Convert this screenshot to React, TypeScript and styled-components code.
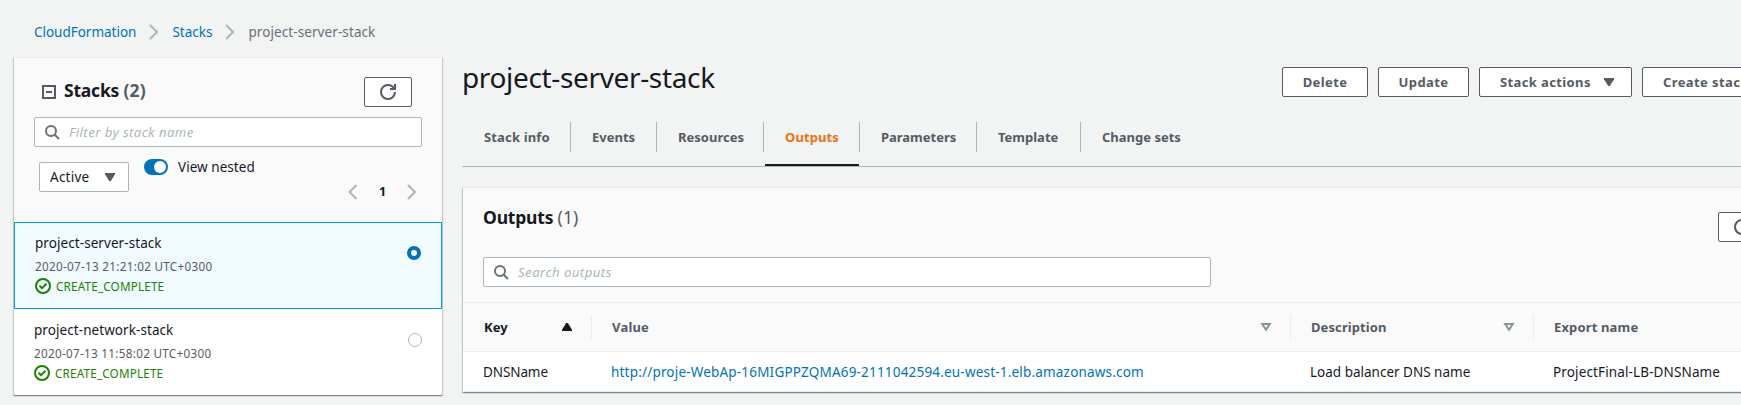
import React from "react";
import styled, { createGlobalStyle } from "styled-components";

const c = {
  ink: "#16191f",
  muted: "#545b64",
  link: "#0073bb",
  line: "#eaeded",
  control: "#aab7b8",
  orange: "#ec7211",
  green: "#1d8102",
  header: "#fafafa",
};

const GlobalStyle = createGlobalStyle`
  * { box-sizing: border-box; }
  body {
    margin: 0;
    overflow: hidden;
    background: #f2f3f3;
    color: ${c.ink};
    font: 13.5px/20px "Noto Sans", "Open Sans", sans-serif;
  }
`;

const Label = styled.span<{ $track?: number }>`
  white-space: nowrap;
  letter-spacing: ${(p) => p.$track ?? 0}px;
`;

const Page = styled.div`
  width: 100%;
  height: 405px;
  overflow: hidden;
`;

const Breadcrumbs = styled.nav`
  display: flex;
  align-items: center;
  height: 57px;
  padding: 7px 0 0 34px;
  color: #687078;
`;

const Crumb = styled.a`
  color: ${c.link};
  white-space: nowrap;
`;

const CrumbArrow = styled.span`
  display: flex;
  margin: 0 10px 0 10px;
`;

const Columns = styled.div`
  display: flex;
  align-items: flex-start;
`;

const Panel = styled.section`
  background: #fff;
  border-top: 1px solid ${c.line};
  box-shadow: 0 1px 1px 0 rgba(0, 28, 36, 0.3), 1px 1px 1px 0 rgba(0, 28, 36, 0.15),
    -1px 1px 1px 0 rgba(0, 28, 36, 0.15);
`;

const Sidebar = styled(Panel)`
  flex: none;
  width: 428px;
  height: 338px;
  margin-left: 14px;
`;

const SidebarHead = styled.div`
  height: 164px;
  background: ${c.header};
`;

const SidebarTitleRow = styled.div`
  display: flex;
  align-items: flex-start;
  padding: 19px 30px 0 28px;
`;

const CollapseBox = styled.span`
  display: flex;
  align-items: center;
  justify-content: center;
  width: 14px;
  height: 14px;
  margin: 8px 8px 0 0;
  border: 2px solid ${c.muted};

  &::before {
    content: "";
    width: 6px;
    height: 2px;
    background: ${c.muted};
  }
`;

const PanelTitle = styled.h2`
  margin: 0;
  font-size: 17.5px;
  line-height: 22px;
  font-weight: 700;
  letter-spacing: -0.2px;
  white-space: nowrap;
`;

const SidebarTitle = styled(PanelTitle)`
  margin: 2px auto 0 0;
`;

const Count = styled.span<{ $weight?: number }>`
  color: ${c.muted};
  font-weight: ${(p) => p.$weight ?? 700};
  letter-spacing: 0.1px;
`;

const Button = styled.button<{ $width: number }>`
  display: flex;
  flex: none;
  align-items: center;
  justify-content: center;
  gap: 10px;
  width: ${(p) => p.$width}px;
  height: 30px;
  padding: 0;
  border: 1px solid ${c.muted};
  border-radius: 2px;
  background: #fff;
  color: ${c.muted};
  font: inherit;
  font-size: 13px;
  font-weight: 700;
`;

const MenuButton = styled(Button)`
  justify-content: flex-start;
  padding-left: 20px;
`;

const SearchBox = styled.div`
  display: flex;
  align-items: center;
  gap: 9px;
  height: 30px;
  padding-left: 9px;
  border: 1px solid ${c.control};
  border-radius: 2px;
  background: #fff;
  color: ${c.control};
  font-size: 13.2px;
  font-style: italic;
`;

const StackFilter = styled(SearchBox)`
  margin: 10px 20px 0;
`;

const FilterRow = styled.div`
  display: flex;
  align-items: flex-start;
  padding: 0 22px 0 25px;
`;

const Select = styled.div`
  display: flex;
  align-items: center;
  justify-content: space-between;
  width: 90px;
  height: 30px;
  margin-top: 15px;
  padding: 0 10px 0 10px;
  border: 1px solid ${c.control};
  border-radius: 2px;
  background: #fff;
`;

const Toggle = styled.span`
  display: flex;
  justify-content: flex-end;
  width: 24px;
  height: 16px;
  margin: 12px 10px 0 15px;
  padding: 2px;
  border-radius: 8px;
  background: ${c.link};

  &::before {
    content: "";
    width: 12px;
    height: 12px;
    border-radius: 50%;
    background: #fff;
  }
`;

const ToggleLabel = styled(Label)`
  margin-top: 10px;
`;

const Pagination = styled.div`
  display: flex;
  align-items: center;
  justify-content: space-between;
  width: 75px;
  margin: 35px 0 0 auto;
  font-weight: 700;
`;

const PageNumber = styled.span`
  font-size: 12.5px;
`;

const StackRow = styled.div<{ $selected?: boolean }>`
  display: flex;
  justify-content: space-between;
  height: ${(p) => (p.$selected ? 87 : 86)}px;
  padding: ${(p) => (p.$selected ? "10px 20px 0" : "11px 20px 0")};
  border: ${(p) => (p.$selected ? "1px solid #00a1c9" : "0")};
  background: ${(p) => (p.$selected ? "#f1faff" : "#fff")};
`;

const StackText = styled.div`
  display: flex;
  flex-direction: column;
`;

const StackDate = styled(Label)`
  margin-top: 4px;
  color: ${c.muted};
  font-size: 11.7px;
  line-height: 18px;
`;

const Status = styled.div`
  display: flex;
  gap: 5px;
  margin-top: 2px;
  color: ${c.green};
  font-size: 11.7px;
  line-height: 18px;
`;

const Radio = styled.span<{ $on?: boolean }>`
  width: 14px;
  height: 14px;
  margin-top: 13px;
  border: ${(p) => (p.$on ? `4px solid ${c.link}` : `1px solid ${c.control}`)};
  border-radius: 50%;
  background: #fff;
`;

const Main = styled.main`
  flex: none;
  width: 1299px;
  margin-left: 20px;
`;

const MainHead = styled.header`
  display: flex;
  align-items: flex-start;
  height: 65px;
`;

const PageTitle = styled.h1`
  flex: none;
  width: 820px;
  margin: 2px 0 0;
  font-size: 28px;
  line-height: 36px;
  font-weight: 400;
  letter-spacing: -0.35px;
`;

const Actions = styled.div`
  display: flex;
  gap: 10px;
  margin-top: 10px;
`;

const TabBar = styled.div`
  display: flex;
  height: 45px;
  border-bottom: 1px solid ${c.control};
`;

const Tab = styled.div<{ $width: number; $active?: boolean }>`
  display: flex;
  flex: none;
  flex-direction: column;
  justify-content: space-between;
  width: ${(p) => p.$width}px;
  color: ${(p) => (p.$active ? c.orange : c.muted)};
  font-size: 13px;
  font-weight: 700;
`;

const TabLabel = styled.div<{ $divider: boolean; $first: boolean }>`
  height: 30px;
  padding: 5px 0 0 ${(p) => (p.$first ? 22 : 21)}px;
  border-right: ${(p) => (p.$divider ? `1px solid ${c.control}` : "0")};
`;

const TabMarker = styled.div`
  height: 2px;
  margin: 0 1px;
  background: ${c.ink};
`;

const OutputsPanel = styled(Panel)`
  height: 205px;
  margin: 20px 0 0 1px;
`;

const OutputsHead = styled.div`
  height: 115px;
  padding: 18px 0 0 20px;
  background: ${c.header};
  border-bottom: 1px solid ${c.line};
`;

const OutputsTitleRow = styled.div`
  display: flex;
  align-items: flex-start;
  justify-content: space-between;
  width: 1283px;
  height: 51px;
`;

const RefreshSlot = styled.div`
  margin-top: 6px;
`;

const OutputsSearch = styled(SearchBox)`
  width: 728px;
`;

const Columns4 = styled.div`
  display: grid;
  grid-template-columns: 129px 699px 243px 1fr;
`;

const TableHead = styled(Columns4)`
  align-items: center;
  height: 49px;
  background: ${c.header};
  border-bottom: 1px solid ${c.line};
  color: ${c.muted};
  font-size: 13px;
  font-weight: 700;
`;

const HeadCell = styled.div<{ $sorted?: boolean; $last?: boolean }>`
  display: flex;
  align-items: center;
  justify-content: space-between;
  height: 24px;
  padding: 0 16px 0 ${(p) => (p.$sorted ? 21 : 20)}px;
  border-right: ${(p) => (p.$last ? "0" : `1px solid ${c.line}`)};
  color: ${(p) => (p.$sorted ? c.ink : "inherit")};
`;

const TableRow = styled(Columns4)`
  align-items: center;
  height: 40px;
  border-bottom: 1px solid ${c.line};
`;

const Cell = styled.div`
  padding-left: 19px;

  &:first-child {
    padding-left: 20px;
  }
`;

const UrlLink = styled(Label)`
  color: ${c.link};
`;

const Icon = styled.svg`
  display: block;
  flex: none;
  width: 16px;
  height: 16px;
  fill: none;
  stroke-width: 2;
`;

const StatusIcon = styled(Icon)`
  margin-top: 1px;
`;

const Chevron = ({ left }: { left?: boolean }) => (
  <Icon viewBox="0 0 16 16" stroke={c.control}>
    <path d={left ? "M11.5 1 4.5 8l7 7" : "M4 1l7 7-7 7"} />
  </Icon>
);

const Search = () => (
  <Icon viewBox="0 0 16 16" stroke="#687078">
    <circle cx="7" cy="7" r="5" />
    <path d="M10.5 10.5 15 15" />
  </Icon>
);

const Refresh = () => (
  <Icon viewBox="0 0 16 16" stroke={c.muted}>
    <path d="M10 5h5V0" />
    <path d="M15 8c0 3.87-3.13 7-7 7s-7-3.13-7-7 3.13-7 7-7c2.79 0 5.2 1.63 6.33 4" />
  </Icon>
);

const CaretDown = () => (
  <Icon viewBox="0 0 16 16">
    <path fill={c.muted} d="M3 4h10v1.2L8.8 12H7.2L3 5.2z" />
  </Icon>
);

const CaretUp = () => (
  <Icon viewBox="0 0 16 16">
    <path fill={c.ink} d="M3 12h10v-1.2L8.8 4H7.2L3 10.8z" />
  </Icon>
);

const CaretOutline = () => (
  <Icon viewBox="0 0 16 16" stroke="#879596">
    <path d="M4.2 5h7.6L8 10.8z" />
  </Icon>
);

const Success = () => (
  <StatusIcon viewBox="0 0 16 16" stroke={c.green}>
    <circle cx="8" cy="8" r="7" />
    <path d="M4.5 7.7 7 10.2l4.5-4.4" />
  </StatusIcon>
);

const stacks = [
  { name: "project-server-stack", date: "2020-07-13 21:21:02 UTC+0300", selected: true },
  { name: "project-network-stack", date: "2020-07-13 11:58:02 UTC+0300", selected: false },
];

const tabs = [
  { name: "Stack info", width: 109, track: 0.15 },
  { name: "Events", width: 86, track: 0 },
  { name: "Resources", width: 107, track: 0 },
  { name: "Outputs", width: 96, track: 0.1, active: true },
  { name: "Parameters", width: 117, track: -0.02 },
  { name: "Template", width: 104, track: 0 },
  { name: "Change sets", width: 120, track: 0 },
];

export default function App() {
  return (
    <Page>
      <GlobalStyle />
      <Breadcrumbs>
        <Crumb><Label $track={-0.02}>CloudFormation</Label></Crumb>
        <CrumbArrow><Chevron /></CrumbArrow>
        <Crumb><Label>Stacks</Label></Crumb>
        <CrumbArrow><Chevron /></CrumbArrow>
        <Label $track={0.09}>project-server-stack</Label>
      </Breadcrumbs>
      <Columns>
        <Sidebar>
          <SidebarHead>
            <SidebarTitleRow>
              <CollapseBox />
              <SidebarTitle>Stacks <Count>(2)</Count></SidebarTitle>
              <Button $width={48}><Refresh /></Button>
            </SidebarTitleRow>
            <StackFilter>
              <Search />
              <Label $track={0.42}>Filter by stack name</Label>
            </StackFilter>
            <FilterRow>
              <Select>
                <Label $track={0.25}>Active</Label>
                <CaretDown />
              </Select>
              <Toggle />
              <ToggleLabel $track={0.05}>View nested</ToggleLabel>
              <Pagination>
                <Chevron left />
                <PageNumber>1</PageNumber>
                <Chevron />
              </Pagination>
            </FilterRow>
          </SidebarHead>
          {stacks.map((s) => (
            <StackRow key={s.name} $selected={s.selected}>
              <StackText>
                <Label $track={0.07}>{s.name}</Label>
                <StackDate $track={0.3}>{s.date}</StackDate>
                <Status>
                  <Success />
                  <Label $track={0.18}>CREATE_COMPLETE</Label>
                </Status>
              </StackText>
              <Radio $on={s.selected} />
            </StackRow>
          ))}
        </Sidebar>
        <Main>
          <MainHead>
            <PageTitle>project-server-stack</PageTitle>
            <Actions>
              <Button $width={86}><Label $track={0.4}>Delete</Label></Button>
              <Button $width={91}><Label $track={0.4}>Update</Label></Button>
              <MenuButton $width={153}>
                <Label $track={0.38}>Stack actions</Label>
                <CaretDown />
              </MenuButton>
              <MenuButton $width={151}>
                <Label $track={0.4}>Create stack</Label>
                <CaretDown />
              </MenuButton>
            </Actions>
          </MainHead>
          <TabBar>
            {tabs.map((t, i) => (
              <Tab key={t.name} $width={t.width} $active={t.active}>
                <TabLabel $first={i === 0} $divider={i < tabs.length - 1}>
                  <Label $track={t.track}>{t.name}</Label>
                </TabLabel>
                {t.active && <TabMarker />}
              </Tab>
            ))}
          </TabBar>
          <OutputsPanel>
            <OutputsHead>
              <OutputsTitleRow>
                <PanelTitle>Outputs <Count $weight={400}>(1)</Count></PanelTitle>
                <RefreshSlot><Button $width={48}><Refresh /></Button></RefreshSlot>
              </OutputsTitleRow>
              <OutputsSearch>
                <Search />
                <Label $track={0.45}>Search outputs</Label>
              </OutputsSearch>
            </OutputsHead>
            <TableHead>
              <HeadCell $sorted><Label>Key</Label><CaretUp /></HeadCell>
              <HeadCell><Label $track={0.2}>Value</Label><CaretOutline /></HeadCell>
              <HeadCell><Label $track={0.1}>Description</Label><CaretOutline /></HeadCell>
              <HeadCell $last><Label $track={0.15}>Export name</Label></HeadCell>
            </TableHead>
            <TableRow>
              <Cell><Label $track={-0.1}>DNSName</Label></Cell>
              <Cell>
                <UrlLink $track={0.19}>
                  http://proje-WebAp-16MIGPPZQMA69-2111042594.eu-west-1.elb.amazonaws.com
                </UrlLink>
              </Cell>
              <Cell><Label>Load balancer DNS name</Label></Cell>
              <Cell><Label $track={0.13}>ProjectFinal-LB-DNSName</Label></Cell>
            </TableRow>
          </OutputsPanel>
        </Main>
      </Columns>
    </Page>
  );
}
